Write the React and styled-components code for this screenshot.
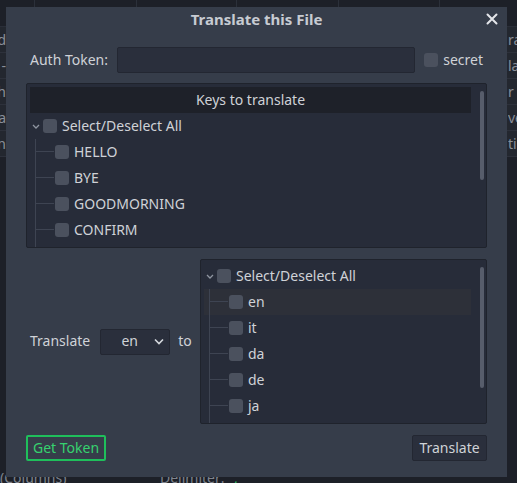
import React from "react";
import styled, { createGlobalStyle, css } from "styled-components";

const GlobalStyle = createGlobalStyle`
  html, body { margin: 0; padding: 0; background: #1d2028; }
  body {
    font-family: "Noto Sans", "Open Sans", sans-serif;
    font-size: 14px;
    color: #cdd0d6;
  }
  * { box-sizing: border-box; }
`;

/* ---------- editor behind the popup ---------- */

const Editor = styled.div`
  position: relative;
  width: 517px;
  height: 483px;
  overflow: hidden;
  display: flex;
  flex-direction: column;
  background: #1d2028;
`;

const ColumnHeader = styled.div`
  display: grid;
  grid-template-columns: 35px 102px 100px 102px 101px 1fr;
  height: 27px;
  border-bottom: 1px solid #2a2e38;
`;

const HeaderCell = styled.div`
  border-right: 1px solid #2b303a;
  &:last-child { border-right: none; }
`;

const SheetRows = styled.div`
  display: flex;
  flex-direction: column;
  background: #23272f;
`;

const SheetRow = styled.div`
  display: flex;
  justify-content: space-between;
  height: 26px;
  align-items: center;
  border-bottom: 1px solid #2d313b;
  color: #8a8f99;
  white-space: nowrap;
`;

const SheetLeft = styled.span`
  width: 40px;
  margin-left: -34px;
  text-align: right;
  overflow: hidden;
`;

const SheetRight = styled.span`
  width: 9px;
  overflow: hidden;
`;

const Spacer = styled.div`
  flex: 1;
`;

const FooterLine = styled.div`
  display: flex;
  height: 15px;
  line-height: 20px;
  color: #7f848e;
  white-space: nowrap;
`;

const FooterText = styled.span`
  width: ${(p) => p.$w}px;
  color: ${(p) => p.$color || "inherit"};
`;

/* ---------- popup ---------- */

const Dialog = styled.section`
  position: absolute;
  left: 6px;
  top: 7px;
  width: 501px;
  height: 470px;
  background: #363d4a;
  display: flex;
  flex-direction: column;
  padding: 0 20px 16px;
`;

const TitleBar = styled.header`
  position: relative;
  height: 24px;
  margin: 0 -20px;
  display: flex;
  align-items: center;
  justify-content: center;
`;

const Title = styled.h1`
  margin: 0;
  font-size: 15px;
  font-weight: 700;
  color: #c7cbd2;
  line-height: 24px;
`;

const CloseButton = styled.button`
  position: absolute;
  right: 9px;
  top: 6px;
  width: 12px;
  height: 12px;
  padding: 0;
  border: none;
  background: none;
  display: flex;
`;

const FieldRow = styled.div`
  margin-top: 16px;
  height: 26px;
  display: flex;
  align-items: center;
  padding: 0 4px;
`;

/* text sits one pixel above the geometric centre of its row */
const Label = styled.span`
  white-space: nowrap;
  color: ${(p) => p.$color || "#cfd2d7"};
  margin-bottom: 2px;
`;

const TextInput = styled.div`
  flex: 1;
  height: 26px;
  margin: 0 9px;
  background: #2a2f3c;
  border: 1px solid #232732;
  border-radius: 2px;
`;

const Check = styled.span`
  flex: none;
  width: 14px;
  height: 14px;
  border-radius: 3px;
  background: #4b515e;
  margin-right: 5px;
`;

const TreeBox = styled.div`
  flex: none;
  display: flex;
  height: 165px;
  width: ${(p) => (p.$width ? `${p.$width}px` : "auto")};
  margin-top: ${(p) => p.$top || 0}px;
  background: #272c39;
  border: 1px solid #1f232c;
  border-radius: 2px;
  padding: 3px 0 0 3px;
  overflow: hidden;
`;

const TreeBody = styled.div`
  flex: 1;
  display: flex;
  flex-direction: column;
`;

const TreeHeader = styled.div`
  flex: none;
  height: 26px;
  background: #1e2129;
  display: flex;
  align-items: center;
  justify-content: center;
`;

const ScrollTrack = styled.div`
  flex: none;
  width: 15px;
  padding: 4px 0 0 9px;
`;

const ScrollThumb = styled.div`
  width: 4px;
  height: ${(p) => p.$h}px;
  border-radius: 2px;
  background: #575d6b;
`;

const Row = styled.div`
  flex: none;
  height: 26px;
  display: flex;
  align-items: center;
  white-space: nowrap;
  ${(p) =>
    p.$hot &&
    css`
      background: #2d3039;
    `}
`;

const Fold = styled.span`
  flex: none;
  width: 13px;
  display: flex;
  padding-left: 2px;
`;

/* connector lines from a parent to its children */
const Guide = styled.span`
  flex: none;
  position: relative;
  width: 25px;
  height: 100%;
  &::before {
    content: "";
    position: absolute;
    left: 5px;
    top: 0;
    bottom: 0;
    width: 1px;
    background: #3e4452;
  }
  &::after {
    content: "";
    position: absolute;
    left: 5px;
    right: 1px;
    top: 12px;
    height: 1px;
    background: #3e4452;
  }
`;

const Lower = styled.div`
  flex: none;
  margin-top: 11px;
  height: 165px;
  display: flex;
  align-items: center;
`;

const LangPicker = styled.div`
  display: flex;
  align-items: center;
  padding-left: 4px;
`;

const Select = styled.div`
  width: 70px;
  height: 26px;
  margin: 0 8px 0 10px;
  display: flex;
  align-items: center;
  padding-left: 4px;
  background: #2a2f3c;
  border: 1px solid #232732;
  border-radius: 2px;
`;

const SelectValue = styled.span`
  flex: 1;
  text-align: center;
  color: #cfd2d7;
  margin-bottom: 2px;
`;

const SelectArrow = styled.svg`
  flex: none;
  margin-right: 5px;
`;

const Buttons = styled.div`
  flex: none;
  margin-top: 11px;
  height: 26px;
  display: flex;
  justify-content: space-between;
`;

const Button = styled.button`
  height: 26px;
  padding: 0 0 2px;
  font: inherit;
  font-size: 14px;
  border-radius: 2px;
  ${(p) =>
    p.$accent
      ? css`
          width: 80px;
          background: transparent;
          border: 2px solid #1fbf5b;
          color: #36d26f;
        `
      : css`
          width: 75px;
          background: #2a2f3c;
          border: 1px solid #232732;
          color: #cfd2d7;
        `}
`;

const Chevron = () => (
  <svg width="8" height="5" viewBox="0 0 8 5">
    <path d="M1 1 L4 4 L7 1" fill="none" stroke="#8f95a0" strokeWidth="1.3" />
  </svg>
);

const TreeRoot = ({ label }) => (
  <Row>
    <Fold>
      <Chevron />
    </Fold>
    <Check />
    <Label>{label}</Label>
  </Row>
);

const TreeLeaf = ({ label, hot }) => (
  <Row $hot={hot}>
    <Guide />
    <Check />
    <Label>{label}</Label>
  </Row>
);

const keys = ["HELLO", "BYE", "GOODMORNING", "CONFIRM", "CANCEL"];
const langs = ["en", "it", "da", "de", "ja", "fr"];

const sheet = [
  ["and", "ra"],
  ["-", "la"],
  ["with", "r c"],
  ["a", "ve"],
  ["in", "tia"],
];

export default function App() {
  return (
    <>
      <GlobalStyle />
      <Editor>
        <ColumnHeader>
          <HeaderCell />
          <HeaderCell />
          <HeaderCell />
          <HeaderCell />
          <HeaderCell />
          <HeaderCell />
        </ColumnHeader>
        <SheetRows>
          {sheet.map(([l, r]) => (
            <SheetRow key={l}>
              <SheetLeft>{l}</SheetLeft>
              <SheetRight>{r}</SheetRight>
            </SheetRow>
          ))}
        </SheetRows>
        <Spacer />
        <FooterLine>
          <FooterText $w={160}>(Columns)</FooterText>
          <FooterText $w={74}>Delimiter:</FooterText>
          <FooterText $w={20} $color="#2fbf62">,</FooterText>
        </FooterLine>

        <Dialog>
          <TitleBar>
            <Title>Translate this File</Title>
            <CloseButton aria-label="close">
              <svg width="12" height="12" viewBox="0 0 12 12">
                <path d="M1.5 1.5 L10.5 10.5 M10.5 1.5 L1.5 10.5" stroke="#e4e6ea" strokeWidth="2" strokeLinecap="round" />
              </svg>
            </CloseButton>
          </TitleBar>

          <FieldRow>
            <Label>Auth Token:</Label>
            <TextInput />
            <Check />
            <Label>secret</Label>
          </FieldRow>

          <TreeBox $top={10}>
            <TreeBody>
              <TreeHeader>
                <Label>Keys to translate</Label>
              </TreeHeader>
              <TreeRoot label="Select/Deselect All" />
              {keys.map((k) => (
                <TreeLeaf key={k} label={k} />
              ))}
            </TreeBody>
            <ScrollTrack>
              <ScrollThumb $h={89} />
            </ScrollTrack>
          </TreeBox>

          <Lower>
            <LangPicker>
              <Label>Translate</Label>
              <Select>
                <SelectValue>en</SelectValue>
                <SelectArrow width="10" height="7" viewBox="0 0 10 7">
                  <path d="M1 1.5 L5 5.5 L9 1.5" fill="none" stroke="#d5d8dd" strokeWidth="1.6" />
                </SelectArrow>
              </Select>
              <Label>to</Label>
            </LangPicker>
            <Spacer />
            <TreeBox $width={287}>
              <TreeBody>
                <TreeRoot label="Select/Deselect All" />
                {langs.map((l, i) => (
                  <TreeLeaf key={l} label={l} hot={i === 0} />
                ))}
              </TreeBody>
              <ScrollTrack>
                <ScrollThumb $h={121} />
              </ScrollTrack>
            </TreeBox>
          </Lower>

          <Buttons>
            <Button $accent>Get Token</Button>
            <Button>Translate</Button>
          </Buttons>
        </Dialog>
      </Editor>
    </>
  );
}
